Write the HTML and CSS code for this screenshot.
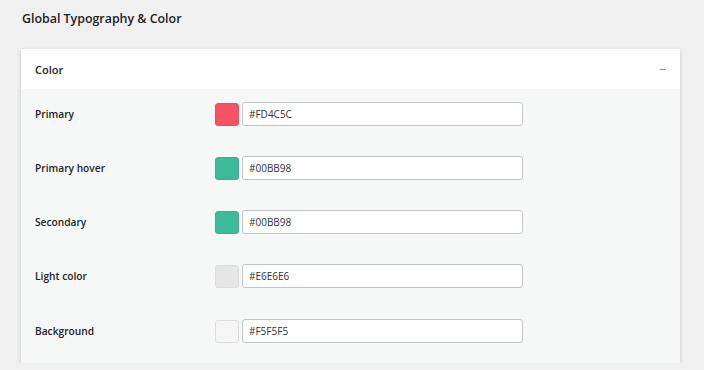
FILE: index.html
```html
<!DOCTYPE html>
<html lang="en">

<head>
    <meta charset="UTF-8">
    <meta name="viewport" content="width=device-width, initial-scale=1.0">
    <title>Global Typography &amp; Color</title>
    <link rel="stylesheet" href="styles.css">
</head>

<body>
    <h1 class="page-title">Global Typography &amp; Color</h1>

    <div class="panel">
        <div class="panel-head">
            <span>Color</span>
            <span class="toggle">&minus;</span>
        </div>
        <div class="panel-body">
            <div class="color-row">
                <label>Primary</label>
                <div class="picker">
                    <span class="swatch sw-primary"></span>
                    <input type="text" value="#FD4C5C">
                </div>
            </div>
            <div class="color-row">
                <label>Primary hover</label>
                <div class="picker">
                    <span class="swatch sw-green"></span>
                    <input type="text" value="#00BB98">
                </div>
            </div>
            <div class="color-row">
                <label>Secondary</label>
                <div class="picker">
                    <span class="swatch sw-green"></span>
                    <input type="text" value="#00BB98">
                </div>
            </div>
            <div class="color-row">
                <label>Light color</label>
                <div class="picker">
                    <span class="swatch sw-light"></span>
                    <input type="text" value="#E6E6E6">
                </div>
            </div>
            <div class="color-row">
                <label>Background</label>
                <div class="picker">
                    <span class="swatch sw-bg"></span>
                    <input type="text" value="#F5F5F5">
                </div>
            </div>
        </div>
    </div>
</body>

</html>
```

FILE: styles.css
```css
* {
    margin: 0;
    padding: 0;
    box-sizing: border-box;
}

body {
    background: #f0f0f1;
    font-family: "Open Sans", "Noto Sans", sans-serif;
    color: #2c3338;
    padding: 0 24px 0 21px;
}

.page-title {
    font-size: 12.4px;
    font-weight: 600;
    color: #1d2327;
    padding: 10px 0 0 1px;
    height: 49px;
}

/* panel */

.panel {
    width: 659px;
    background: #f6f7f7;
    box-shadow: 0 1px 4px rgba(0, 0, 0, 0.18);
}

.panel-head {
    height: 40px;
    background: #fff;
    display: flex;
    align-items: center;
    justify-content: space-between;
    padding: 0 14px 0 14px;
    font-size: 11px;
    font-weight: 600;
    color: #1d2327;
}

.panel-head .toggle {
    color: #787c82;
    font-weight: 400;
    font-size: 12px;
}

.panel-body {
    padding: 13px 0 20px 14px;
    display: flex;
    flex-direction: column;
    gap: 30px;
}

.color-row {
    display: flex;
    align-items: center;
    height: 24px;
}

.color-row:last-child {
    margin-top: 1px;
}

.color-row label {
    width: 180px;
    font-size: 10.2px;
    font-weight: 600;
    color: #1d2327;
}

.picker {
    display: flex;
    align-items: center;
    gap: 3px;
}

.swatch {
    width: 24px;
    height: 23px;
    border-radius: 3px;
    border: 1px solid #dcdcde;
}

.sw-primary {
    background: #f55360;
    border-color: #e8505c;
}

.sw-green {
    background: #3dba98;
    border-color: #38b08f;
}

.sw-light {
    background: #e6e6e6;
}

.sw-bg {
    background: #f5f5f5;
}

.picker input {
    width: 281px;
    height: 24px;
    border: 1px solid #c3c4c7;
    border-radius: 3px;
    background: #fff;
    padding: 0 6px;
    font-family: "Open Sans", "Noto Sans", sans-serif;
    font-size: 10px;
    color: #2c3338;
}
```
